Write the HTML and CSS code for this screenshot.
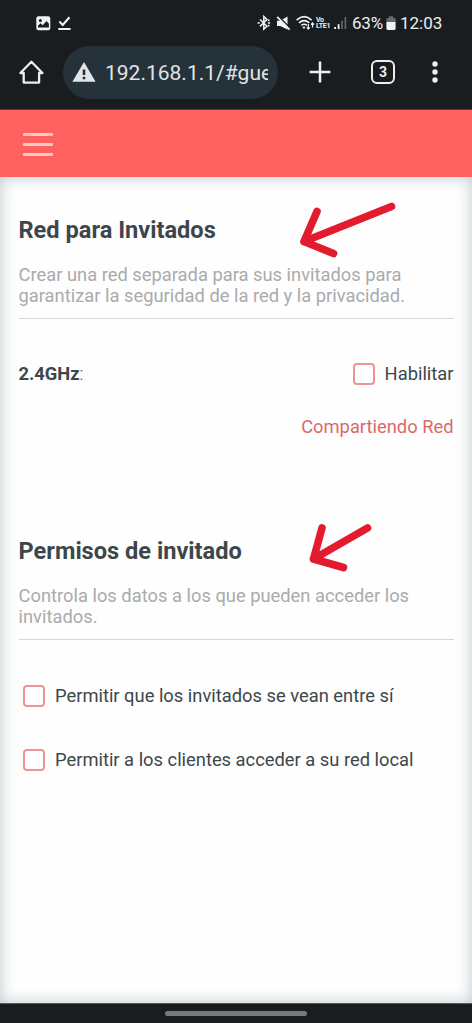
FILE: index.html
```html
<!DOCTYPE html>
<html lang="es">
<head>
<meta charset="utf-8">
<title>Red para Invitados</title>
<link rel="stylesheet" href="styles.css">
</head>
<body>
<div class="phone">
  <div class="status">
    <svg class="s-image" width="15" height="15" viewBox="0 0 15 15"><rect x=".3" y=".3" width="14" height="14" rx="2.2" fill="#f1f2f3"/><path d="M2 11.5V9.8l2.6-2.6 2.2 2.1 3.7-4.2 2.4 2.6v3.8z" fill="#1a1d20"/><circle cx="4.4" cy="4.5" r="1.5" fill="#1a1d20"/></svg>
    <svg class="s-check" width="13" height="15" viewBox="0 0 13 15" fill="none" stroke="#f1f2f3" stroke-width="2.1"><path d="M1.4 5.6l3.3 3.3L11.5 1.2M.3 13h12.3"/></svg>
    <div class="status-right">
      <svg width="14" height="16" viewBox="0 0 14 16" fill="none" stroke="#f1f2f3" stroke-width="1.5"><path d="M3 4.5l7 6.7-3.2 2.9V1.5L10 4.6l-7 6.8"/><path d="M.6 8h2.2M10.9 8h2.2M11 5.4h1.5M11 10.6h1.5" stroke-width="1.7"/></svg>
      <svg class="s-mute" width="15" height="15" viewBox="0 0 15 15"><path d="M1 4.8h3.2L11.5 .6v13L4.2 9.9H1z" fill="#f1f2f3"/><path d="M2.4 .2l12 12.2" stroke="#1a1d20" stroke-width="1.5"/><path d="M1.2 .9l12.4 12.8" stroke="#f1f2f3" stroke-width="1.7"/></svg>
      <svg class="s-wifi" width="19" height="16" viewBox="0 0 19 16" fill="none" stroke="#f1f2f3" stroke-width="1.6"><path d="M.6 5.1q7.5-6.8 15 0M3 7.9q5.1-4.5 10.2 0M5.4 10.4q2.7-2.3 5.4 0"/><path d="M6.4 12.2q1.7-1.2 3 0L8 14z" fill="#f1f2f3" stroke="none"/><path d="M12.3 9v4.7M10.8 12.3l1.5 1.7 1.5-1.7M16.5 12.5V8M15 9.7L16.5 8 18 9.7" stroke-width="1.2"/></svg>
      <span class="volte"><span>Vo</span><span>LTE1</span></span>
      <svg class="s-signal" width="13" height="13" viewBox="0 0 13 13"><path d="M.2 10h1.8v2H.2zM3.7 7.2h1.8V12H3.7z" fill="#f1f2f3"/><path d="M7.2 3.8h1.6V12H7.2zM10.6 0h1.6v12h-1.6z" fill="#65696d"/></svg>
      <span class="battery-text">63%</span>
      <svg class="s-battery" width="10" height="15" viewBox="0 0 10 15"><path d="M3 .3h4v1.5h1q1.6 0 1.6 1.6v2.8H.4V3.4Q.4 1.8 2 1.8h1z" fill="#65696b"/><path d="M.4 6h9.2v6.6q0 1.4-1.4 1.4H1.8Q.4 14 .4 12.6z" fill="#f1f2f3"/></svg>
      <span class="clock">12:03</span>
    </div>
  </div>
  <div class="toolbar">
    <svg class="home" width="26" height="26" viewBox="0 0 26 26" fill="none" stroke="#eceeef" stroke-width="2.3" stroke-linejoin="round"><path d="M2.4 14L13.4 2.8 24.4 14h-3.3v9.6H5.7V14z"/></svg>
    <div class="url">
      <svg width="24" height="21" viewBox="0 0 24 21"><path d="M12 0L23.6 19.8H.4z" fill="#e3e6e7"/><path d="M12 7.5v5.6M12 14.7v2.6" stroke="#253239" stroke-width="2.6"/></svg>
      <span class="url-text">192.168.1.1/#gue</span>
    </div>
    <svg class="plus" width="22" height="22" viewBox="0 0 22 22" stroke="#eceeef" stroke-width="2.5"><path d="M.6 11h20.8M11 .6v20.8"/></svg>
    <span class="tabs">3</span>
    <svg class="dots" width="6" height="22" viewBox="0 0 6 22" fill="#eceeef"><circle cx="3" cy="3" r="2.7"/><circle cx="3" cy="11" r="2.7"/><circle cx="3" cy="19" r="2.7"/></svg>
  </div>
  <header class="header">
    <div class="menu"><i></i><i></i><i></i></div>
  </header>
  <main class="content">
    <section>
      <h2>Red para Invitados</h2>
      <p class="desc">Crear una red separada para sus invitados para<br>garantizar la seguridad de la red y la privacidad.</p>
      <div class="band">
        <span class="band-label"><b>2.4GHz</b>:</span>
        <label class="option"><span class="box"></span><span>Habilitar</span></label>
      </div>
      <div class="share">Compartiendo Red</div>
    </section>
    <section class="permissions">
      <h2>Permisos de invitado</h2>
      <p class="desc">Controla los datos a los que pueden acceder los<br>invitados.</p>
      <div class="list">
        <label class="option"><span class="box"></span><span>Permitir que los invitados se vean entre sí</span></label>
        <label class="option"><span class="box"></span><span>Permitir a los clientes acceder a su red local</span></label>
      </div>
    </section>
    <svg class="arrows" width="472" height="826" viewBox="0 177 472 826" fill="none" stroke="#e21b2f" stroke-width="7.6" stroke-linecap="round" stroke-linejoin="round"><path d="M391.5 206.5L304 241.5M317 211.5L304 241.5L333.5 253.5"/><path d="M367.5 528L313.5 559M322 528L313.5 559L343.5 567.5"/></svg>
  </main>
  <div class="gesture"><span></span></div>
</div>
</body>
</html>
```
FILE: styles.css
```css
* { box-sizing: border-box; }
body { margin: 0; font-family: Roboto, sans-serif; color: #3d474b; background: #1a1d20; }
svg { display: block; flex: none; }
.phone { display: flex; flex-direction: column; width: 472px; height: 1023px; overflow: hidden; }
.status { display: flex; align-items: center; height: 46px; padding: 0 30px 0 36px; color: #eceeef; }
.s-check { margin-left: 7px; }
.status-right { display: flex; align-items: center; margin-left: auto; white-space: nowrap; }
.s-mute { margin-left: 5px; }
.s-wifi { margin-left: 5px; }
.volte { display: flex; flex-direction: column; width: 15px; margin-left: 1px; font-size: 7px; line-height: 6px; font-weight: 700; letter-spacing: -.3px; }
.s-signal { margin: 1px 0 0 3px; }
.battery-text { width: 32px; margin-left: 5px; font-size: 17px; letter-spacing: -.2px; }
.s-battery { margin-left: 2px; }
.clock { width: 42px; margin-left: 4px; font-size: 17px; }
.toolbar { display: flex; align-items: center; height: 64px; padding: 0 34px 11px 18px; border-bottom: 1px solid #633438; }
.url { display: flex; align-items: center; width: 215px; height: 53px; margin-left: 19px; padding: 0 10px 0 9px; border-radius: 27px; background: #253239; color: #e0e4e5; }
.url-text { flex: 1; min-width: 0; margin-left: 9px; overflow: hidden; white-space: nowrap; font-size: 21px; line-height: 30px; padding-top: 1px; }
.plus { margin-left: 31px; }
.tabs { display: flex; align-items: center; justify-content: center; width: 24px; height: 24px; margin-left: 40px; border: 2.4px solid #eceeef; border-radius: 6px; color: #eceeef; font-size: 14px; font-weight: 700; }
.dots { margin-left: 37px; }
.header { flex: none; height: 67px; padding: 23px 23px 0; background: #ff6161; }
.menu { display: flex; flex-direction: column; gap: 7.3px; width: 30px; }
.menu i { height: 2.7px; border-radius: 1px; background: #ffc9c6; }
.content { position: relative; flex: none; height: 826px; padding: 38px 18.5px 0; background: #fefefe; box-shadow: inset 0 0 15px rgba(55, 85, 92, .32); }
h2 { margin: 0; font-size: 23.6px; line-height: 30px; font-weight: 700; white-space: nowrap; }
.desc { margin: 19px 0 0; padding-bottom: 12px; border-bottom: 1px solid #d5d6d7; color: #a9abac; font-size: 18.33px; line-height: 21px; white-space: nowrap; }
.band { display: flex; align-items: center; justify-content: space-between; height: 24px; margin-top: 43px; font-size: 18.33px; }
.band-label { padding-bottom: 2px; font-weight: 300; }
.band-label b { font-weight: 700; }
.option { display: flex; align-items: center; font-size: 18.33px; line-height: 22px; white-space: nowrap; }
.box { width: 22px; height: 22px; margin-right: 10px; border: 2px solid #ee9494; border-radius: 4px; }
.share { margin-top: 30px; text-align: right; color: #dc686b; font-size: 18.33px; line-height: 22px; }
.permissions { margin-top: 98px; }
.list { display: flex; flex-direction: column; gap: 42px; padding: 45px 0 0 4.5px; }
.arrows { position: absolute; top: 0; left: 0; pointer-events: none; }
.gesture { display: flex; justify-content: center; flex: 1; padding-top: 7px; border-top: 1px solid #555a5e; background: #1a1d20; }
.gesture span { width: 142px; height: 5px; border-radius: 3px; background: #77797b; }
```
